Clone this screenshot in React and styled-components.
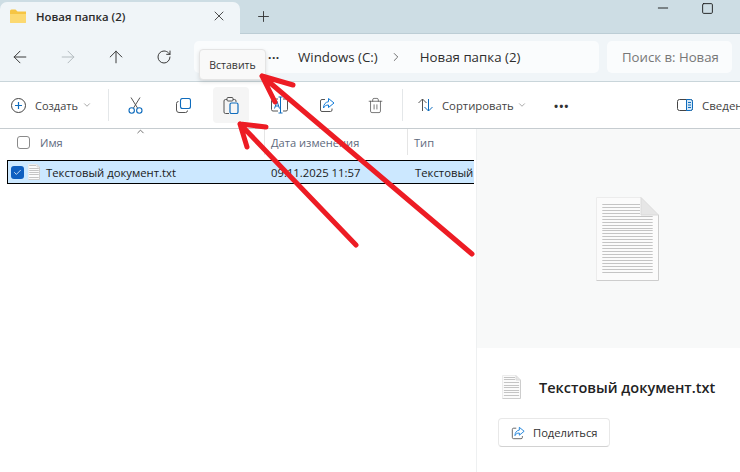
import React from 'react';
import styled, { createGlobalStyle } from 'styled-components';
import { ArrowLeft, ArrowRight, ArrowUp, RotateCw, X, Plus, Minus, Square, ChevronRight, ChevronDown, ChevronUp, Trash2, Check } from 'lucide-react';

const GlobalStyle = createGlobalStyle`
  html, body {
    margin: 0;
    padding: 0;
    background: #fff;
    overflow: hidden;
  }
  * {
    box-sizing: border-box;
  }
  svg {
    flex: none;
  }
`;

const Window = styled.div`
  position: relative;
  width: 740px;
  height: 472px;
  overflow: hidden;
  display: flex;
  flex-direction: column;
  background: #fff;
  color: #1b1b1b;
  font-family: "Open Sans", "Noto Sans", sans-serif;
  font-size: 12px;
`;

const TitleBar = styled.div`
  height: 33px;
  flex: none;
  display: flex;
  background: #cddde4;
  padding-top: 2px;
`;

const Tab = styled.div`
  position: relative;
  z-index: 1;
  width: 240px;
  height: 32px;
  display: flex;
  align-items: center;
  padding: 0 0 4px 10px;
  background: #f0f5f8;
  border-radius: 7px 7px 0 0;
  font-size: 11.4px;
  font-weight: 600;
  color: #2a2a2a;
`;

const TabTitle = styled.span`
  margin-left: 10px;
  flex: 1;
`;

const TabClose = styled.span`
  display: flex;
  margin-right: 13px;
  color: #333;
`;

const NewTab = styled.span`
  display: flex;
  margin: 6px 0 0 15px;
  height: 17px;
  color: #333;
`;

const WindowButtons = styled.div`
  margin-left: auto;
  display: flex;
  gap: 30px;
  padding-right: 26px;
  margin-top: -2px;
  height: 16px;
  align-items: center;
  color: #1b1b1b;
`;

const NavBar = styled.div`
  height: 49px;
  flex: none;
  display: flex;
  align-items: center;
  padding: 0 8px 1px 0;
  background: #f0f5f8;
  border-top: 1px solid #bccdd5;
  border-bottom: 1px solid #c9d5da;
`;

const NavButton = styled.span`
  width: ${p => (p.$first ? 40 : 48)}px;
  margin-right: ${p => (p.$first ? 4 : 0)}px;
  display: flex;
  justify-content: center;
  color: ${p => (p.$disabled ? '#b4bcc0' : '#3a3a3a')};
`;

const AddressBox = styled.div`
  width: 405px;
  height: 32px;
  margin-left: 6px;
  display: flex;
  align-items: center;
  padding-left: 14px;
  background: #fafcfd;
  border-radius: 5px;
  font-size: 13.3px;
  color: #2e2e2e;
`;

const Dots = styled.span`
  margin: -5px 19px 0 46px;
  width: 11px;
  font-size: 12px;
  font-weight: 700;
  letter-spacing: 0.5px;
  line-height: 8px;
`;

const Crumb = styled.span`
  white-space: nowrap;
`;

const CrumbSep = styled.span`
  display: flex;
  margin: 0 17px 0 11px;
  color: #444;
`;

const SearchBox = styled.div`
  margin-left: 8px;
  flex: 1;
  height: 32px;
  display: flex;
  align-items: center;
  padding-left: 15px;
  background: #fafcfd;
  border-radius: 5px;
  font-size: 13.2px;
  color: #777;
`;

const Toolbar = styled.div`
  height: 47px;
  flex: none;
  display: flex;
  align-items: center;
  padding-left: 11px;
  background: #fff;
  border-bottom: 1px solid #c6ccd0;
  white-space: nowrap;
`;

const ToolLabel = styled.span`
  flex: none;
  width: ${p => p.$width}px;
  font-size: ${p => p.$size || 11.3}px;
  color: #444;
  margin-left: 9px;
`;

const Caret = styled.span`
  display: flex;
  margin-left: 4px;
  color: #999;
`;

const Divider = styled.span`
  flex: none;
  width: 1px;
  height: 32px;
  background: #e4e7e9;
  margin: 0 ${p => p.$right}px 0 ${p => p.$left}px;
`;

const ToolButton = styled.span`
  width: 36px;
  height: 36px;
  flex: none;
  display: flex;
  align-items: center;
  justify-content: center;
  margin-right: ${p => p.$after ?? 12}px;
  border-radius: 4px;
  background: ${p => (p.$active ? '#f5f5f5' : 'transparent')};
  color: #555;
`;

const MoreDots = styled.span`
  flex: none;
  width: 16px;
  margin: 1px 0 0 27px;
  font-size: 11px;
  font-weight: 700;
  letter-spacing: 1px;
  line-height: 10px;
  color: #333;
`;

const DetailsToggle = styled.span`
  display: flex;
  align-items: center;
  margin-left: 107px;
`;

const Body = styled.div`
  flex: 1;
  display: flex;
  min-height: 0;
`;

const FilePane = styled.div`
  width: 477px;
  flex: none;
  border-right: 1px solid #eef0f1;
`;

const HeaderRow = styled.div`
  position: relative;
  height: 26px;
  display: flex;
  align-items: center;
  color: #5e6a7d;
  font-size: 11.1px;
`;

const HeaderBox = styled.span`
  flex: none;
  width: 13px;
  height: 13px;
  margin-left: 17px;
  border: 1px solid #8a8a8a;
  border-radius: 3px;
`;

const HeaderCell = styled.span`
  width: ${p => p.$width}px;
  height: 100%;
  display: flex;
  align-items: center;
  flex: none;
  padding-left: ${p => p.$pad || 6}px;
  border-right: ${p => (p.$line ? '1px solid #e5e5e5' : 'none')};
`;

const SortMark = styled.span`
  position: absolute;
  left: 135px;
  top: -3px;
  display: flex;
  color: #666;
`;

const FileRow = styled.div`
  height: 24px;
  width: 467px;
  margin: 5px 0 0 7px;
  display: flex;
  align-items: center;
  background: #cce8ff;
  border: 1px solid #000;
  border-right: none;
  overflow: hidden;
  white-space: nowrap;
  font-size: 11.3px;
  color: #1a1a1a;
`;

const RowCheck = styled.span`
  width: 13px;
  height: 13px;
  margin-left: 3px;
  display: flex;
  align-items: center;
  justify-content: center;
  flex: none;
  background: #0f5fc0;
  border-radius: 3px;
  color: #fff;
`;

const RowCell = styled.span`
  flex: none;
  display: flex;
  width: ${p => p.$width}px;
  margin-left: ${p => p.$left || 0}px;
`;

const PreviewPane = styled.div`
  flex: 1;
  display: flex;
  flex-direction: column;
`;

const PreviewArea = styled.div`
  height: 219px;
  flex: none;
  display: flex;
  justify-content: center;
  padding: 68px 0 0 38px;
  background: #f8f9f9;
`;

const PreviewInfo = styled.div`
  padding: 27px 0 0 25px;
`;

const InfoTitle = styled.div`
  display: flex;
  align-items: center;
  gap: 18px;
  font-size: 14.5px;
  font-weight: 600;
  color: #222;
  white-space: nowrap;
`;

const ShareButton = styled.div`
  width: 112px;
  height: 29px;
  margin: 19px 0 0 -4px;
  display: flex;
  align-items: center;
  padding-left: 12px;
  gap: 8px;
  background: #fff;
  border: 1px solid #e8e8e8;
  border-bottom-color: #d2d2d2;
  border-radius: 4px;
  font-size: 11.2px;
  color: #333;
`;

const Tooltip = styled.div`
  position: absolute;
  left: 199px;
  top: 49px;
  width: 67px;
  height: 31px;
  display: flex;
  align-items: center;
  justify-content: center;
  background: #f9f9f9;
  border: 1px solid #e4e4e4;
  border-radius: 4px;
  box-shadow: 0 2px 4px rgba(0, 0, 0, 0.12);
  font-size: 10.5px;
  color: #333;
`;

const Annotations = styled.svg`
  position: absolute;
  left: 0;
  top: 0;
  pointer-events: none;
`;

const Folder = () => (
  <svg width="16" height="14" viewBox="0 0 16 14">
    <path d="M0 2a1.5 1.5 0 0 1 1.5-1.5h4l2 2H16V12.5A1.5 1.5 0 0 1 14.5 14h-13A1.5 1.5 0 0 1 0 12.5z" fill="#f6c544" />
    <path d="M0 5h16v7.5a1.5 1.5 0 0 1-1.5 1.5h-13A1.5 1.5 0 0 1 0 12.5z" fill="#fcd971" />
  </svg>
);

const PcIcon = () => (
  <svg width="14" height="14" viewBox="0 0 14 14" fill="none">
    <rect x="0.5" y="0.5" width="13" height="9" rx="1.5" stroke="#555" />
    <path d="M4 13h6" stroke="#555" />
  </svg>
);

const CreateIcon = () => (
  <svg width="15" height="15" viewBox="0 0 15 15" fill="none">
    <circle cx="7.5" cy="7.5" r="7" stroke="#444" />
    <path d="M7.5 4v7M4 7.5h7" stroke="#0f6cbd" strokeWidth="1.2" />
  </svg>
);

const CutIcon = () => (
  <svg width="15" height="17" viewBox="0 0 15 17" fill="none">
    <path d="M3 0.5 9.5 11M12 0.5 5.5 11" stroke="#555" />
    <circle cx="3.7" cy="13.5" r="2.7" stroke="#0f6cbd" strokeWidth="1.1" />
    <circle cx="11.3" cy="13.5" r="2.7" stroke="#0f6cbd" strokeWidth="1.1" />
  </svg>
);

const CopyIcon = () => (
  <svg width="15" height="15" viewBox="0 0 15 15" fill="none">
    <rect x="4.5" y="0.5" width="10" height="10" rx="2" stroke="#0f6cbd" strokeWidth="1.1" />
    <path d="M2.5 3.5A2 2 0 0 0 0.5 5.5V12A2.5 2.5 0 0 0 3 14.5H9.5a2 2 0 0 0 2-2" stroke="#555" />
  </svg>
);

const PasteIcon = () => (
  <svg width="16" height="17" viewBox="0 0 16 17" fill="none">
    <path d="M4 2.5H2.5A1.5 1.5 0 0 0 1 4v11A1.5 1.5 0 0 0 2.5 16.500H6" stroke="#555" />
    <path d="M10 2.5h1.5A1.5 1.5 0 0 1 13 4v1" stroke="#555" />
    <rect x="4" y="0.5" width="6" height="3.5" rx="1" stroke="#555" />
    <rect x="7" y="6" width="8" height="10.5" rx="1.5" stroke="#0f6cbd" strokeWidth="1.2" />
  </svg>
);

const RenameIcon = () => (
  <svg width="17" height="18" viewBox="0 0 17 18" fill="none">
    <path d="M7 3H2A1.5 1.5 0 0 0 0.5 4.5v9A1.5 1.5 0 0 0 2 15H7M12 3h3A1.5 1.5 0 0 1 16.5 4.5v9A1.5 1.5 0 0 1 15 15H12" stroke="#555" />
    <path d="M9.5 1v16M7.5 1h4M7.5 17h4" stroke="#0f6cbd" />
    <path d="M3.5 12.5 6 5.5 8.5 12.5M4.5 10h3" stroke="#0f6cbd" />
  </svg>
);

const ShareIcon = ({ size = 16 }) => (
  <svg width={size} height={size} viewBox="0 0 16 16" fill="none">
    <path d="M6 2.5H3A1.5 1.5 0 0 0 1.5 4v9A1.5 1.5 0 0 0 3 14.5h8.500A1.500 1.500 0 0 0 13 13v-1.500" stroke="#555" />
    <path d="M9.5 1.5 15 6l-5.5 4.5V8C7 8 5.5 9 4.5 11c0-3.500 2-6 5-6.300z" stroke="#0f7ad8" strokeLinejoin="round" />
  </svg>
);

const SortIcon = () => (
  <svg width="15" height="14" viewBox="0 0 15 14" fill="none">
    <path d="M4.5 13V1M0.5 5l4-4 4 4" stroke="#555" />
    <path d="M10.5 1v12M6.5 9l4 4 4-4" stroke="#0f6cbd" />
  </svg>
);

const DetailsIcon = () => (
  <svg width="16" height="12" viewBox="0 0 16 12" fill="none">
    <rect x="0.5" y="0.5" width="15" height="11" rx="2" stroke="#444" />
    <path d="M9.5 0.5h4a2 2 0 0 1 2 2v7a2 2 0 0 1-2 2h-4z" fill="#d5e8f7" stroke="#0f6cbd" />
    <path d="M11 3.5h3M11 6h3M11 8.5h3" stroke="#0f6cbd" />
  </svg>
);

// the same sheet is used at every size, only the number of lines changes
const DocIcon = ({ width, height, lines, fold }) => {
  const top = height * 0.08;
  const step = (height * 0.85) / lines;
  const inset = width * 0.1;
  return (
    <svg width={width} height={height} viewBox={`0 0 ${width} ${height}`} fill="none">
      <path d={`M0.5 ${height - 0.5}V0.5H${width - fold}L${width - 0.5} ${fold}V${height - 0.5}z`} fill="#fbfbfb" />
      <path d={`M0.5 ${height - 0.5}V0.5H${width - fold}`} stroke="#ececec" />
      <path d={`M${width - 0.5} ${fold}V${height - 0.5}H0.5`} stroke="#cdcdcd" />
      <path d={`M${width - fold} 0.5V${fold}H${width - 0.5}z`} fill="#e6e6e6" stroke="#dadada" />
      {Array.from({ length: lines }, (_, i) => {
        const y = Math.round(top + step * i) + 0.5;
        const end = y < fold + 1 ? width - fold - 1 : width - inset;
        return <path key={i} d={`M${inset} ${y}H${end}`} stroke="#c4c4c4" />;
      })}
    </svg>
  );
};

const App = () => (
  <Window>
    <GlobalStyle />
    <TitleBar>
      <Tab>
        <Folder />
        <TabTitle>Новая папка (2)</TabTitle>
        <TabClose><X size={16} strokeWidth={1.3} /></TabClose>
      </Tab>
      <NewTab><Plus size={17} strokeWidth={1.3} /></NewTab>
      <WindowButtons>
        <Minus size={16} strokeWidth={1.4} />
        <Square size={13} strokeWidth={1.7} />
      </WindowButtons>
    </TitleBar>

    <NavBar>
      <NavButton $first><ArrowLeft size={20} strokeWidth={1.2} /></NavButton>
      <NavButton $disabled><ArrowRight size={20} strokeWidth={1.2} /></NavButton>
      <NavButton><ArrowUp size={20} strokeWidth={1.2} /></NavButton>
      <NavButton><RotateCw size={16} strokeWidth={1.5} /></NavButton>
      <AddressBox>
        <PcIcon />
        <Dots>...</Dots>
        <Crumb>Windows (C:)</Crumb>
        <CrumbSep><ChevronRight size={14} strokeWidth={1.3} /></CrumbSep>
        <Crumb>Новая папка (2)</Crumb>
      </AddressBox>
      <SearchBox>Поиск в: Новая</SearchBox>
    </NavBar>

    <Toolbar>
      <CreateIcon />
      <ToolLabel $width={43} $size={11}>Создать</ToolLabel>
      <Caret><ChevronDown size={10} /></Caret>
      <Divider $left={16} $right={8} />
      <ToolButton><CutIcon /></ToolButton>
      <ToolButton><CopyIcon /></ToolButton>
      <ToolButton $active><PasteIcon /></ToolButton>
      <ToolButton><RenameIcon /></ToolButton>
      <ToolButton><ShareIcon /></ToolButton>
      <ToolButton $after={0}><Trash2 size={17} strokeWidth={1.1} /></ToolButton>
      <Divider $left={9} $right={15} />
      <SortIcon />
      <ToolLabel $width={71}>Сортировать</ToolLabel>
      <Caret><ChevronDown size={10} /></Caret>
      <MoreDots>•••</MoreDots>
      <DetailsToggle>
        <DetailsIcon />
        <ToolLabel $width={60} $size={11.5}>Сведения</ToolLabel>
      </DetailsToggle>
    </Toolbar>

    <Body>
      <FilePane>
        <HeaderRow>
          <HeaderBox />
          <HeaderCell $width={235} $pad={10} $line>Имя</HeaderCell>
          <HeaderCell $width={143} $line>Дата изменения</HeaderCell>
          <HeaderCell $width={60}>Тип</HeaderCell>
          <SortMark><ChevronUp size={11} /></SortMark>
        </HeaderRow>
        <FileRow>
          <RowCheck><Check size={9} strokeWidth={2} /></RowCheck>
          <RowCell $width={14} $left={4}><DocIcon width={12} height={16} lines={6} fold={3} /></RowCell>
          <RowCell $width={225} $left={4}>Текстовый документ.txt</RowCell>
          <RowCell $width={144}>09.11.2025 11:57</RowCell>
          <RowCell $width={60}>Текстовый</RowCell>
        </FileRow>
      </FilePane>

      <PreviewPane>
        <PreviewArea>
          <DocIcon width={63} height={84} lines={24} fold={18} />
        </PreviewArea>
        <PreviewInfo>
          <InfoTitle>
            <DocIcon width={19} height={24} lines={8} fold={5} />
            Текстовый документ.txt
          </InfoTitle>
          <ShareButton>
            <ShareIcon size={14} />
            Поделиться
          </ShareButton>
        </PreviewInfo>
      </PreviewPane>
    </Body>

    <Tooltip>Вставить</Tooltip>

    <Annotations width="740" height="472" fill="none" stroke="#ed1c24" strokeWidth="5" strokeLinecap="round" strokeLinejoin="round">
      <path d="M472 254 262 76M293 85 262 76 275 102" />
      <path d="M356 245 240 124M266 127 240 124 247 147" />
    </Annotations>
  </Window>
);

export default App;
